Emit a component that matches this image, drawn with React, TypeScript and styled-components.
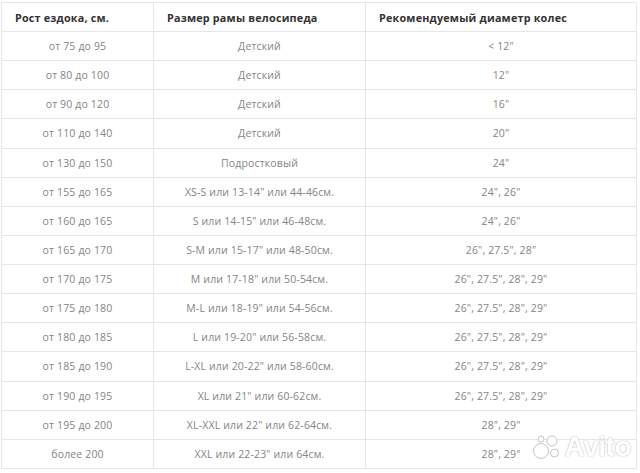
import React from "react";
import styled, { createGlobalStyle } from "styled-components";

const GlobalStyle = createGlobalStyle`
  html, body {
    margin: 0;
    padding: 0;
    background: #fff;
  }
  body {
    font-family: "Open Sans", "Liberation Sans", sans-serif;
  }
`;

const Page = styled.div`
  position: relative;
  width: 640px;
  height: 473px;
  padding: 2px 4px 0 1px;
  box-sizing: border-box;
  overflow: hidden;
`;

const Table = styled.div`
  display: grid;
  grid-template-columns: 152px 212px 271px;
  grid-template-rows: 29px repeat(15, 29.13px);
  border-top: 1px solid #e6e6e6;
  border-left: 1px solid #e6e6e6;
`;

const Cell = styled.div<{ $head?: boolean }>`
  display: flex;
  align-items: center;
  justify-content: ${(p) => (p.$head ? "flex-start" : "center")};
  padding: ${(p) => (p.$head ? "0 0 0 13px" : "0")};
  border-right: 1px solid #e6e6e6;
  border-bottom: 1px solid #e6e6e6;
  font-size: ${(p) => (p.$head ? "10.8px" : "10.5px")};
  font-weight: ${(p) => (p.$head ? 700 : 400)};
  color: ${(p) => (p.$head ? "#333" : "#858585")};
  letter-spacing: ${(p) => (p.$head ? "0.2px" : "0.15px")};
  white-space: nowrap;
`;

const Watermark = styled.div`
  position: absolute;
  right: 9px;
  bottom: 10px;
  display: flex;
  align-items: center;
  gap: 3px;
`;

const WatermarkText = styled.span`
  font-family: "Liberation Sans", Arial, sans-serif;
  font-size: 28px;
  font-weight: 700;
  color: #fff;
  letter-spacing: -0.5px;
  text-shadow: 0 0 1px #b5b5b5, 0 0 2px #d0d0d0;
`;

const rows: [string, string, string][] = [
  ["от 75 до 95", "Детский", "< 12\""],
  ["от 80 до 100", "Детский", "12\""],
  ["от 90 до 120", "Детский", "16\""],
  ["от 110 до 140", "Детский", "20\""],
  ["от 130 до 150", "Подростковый", "24\""],
  ["от 155 до 165", "XS-S или 13-14\" или 44-46см.", "24\", 26\""],
  ["от 160 до 165", "S или 14-15\" или 46-48см.", "24\", 26\""],
  ["от 165 до 170", "S-M или 15-17\" или 48-50см.", "26\", 27.5\", 28\""],
  ["от 170 до 175", "M или 17-18\" или 50-54см.", "26\", 27.5\", 28\", 29\""],
  ["от 175 до 180", "M-L или 18-19\" или 54-56см.", "26\", 27.5\", 28\", 29\""],
  ["от 180 до 185", "L или 19-20\" или 56-58см.", "26\", 27.5\", 28\", 29\""],
  ["от 185 до 190", "L-XL или 20-22\" или 58-60см.", "26\", 27.5\", 28\", 29\""],
  ["от 190 до 195", "XL или 21\" или 60-62см.", "26\", 27.5\", 28\", 29\""],
  ["от 195 до 200", "XL-XXL или 22\" или 62-64см.", "28\", 29\""],
  ["более 200", "XXL или 22-23\" или 64см.", "28\", 29\""],
];

function AvitoDots() {
  return (
    <svg width="30" height="26" viewBox="0 0 30 26">
      <g fill="#fff" stroke="#b5b5b5" strokeWidth="0.8">
        <circle cx="9" cy="17" r="7.5" />
        <circle cx="20" cy="7" r="5" />
        <circle cx="22.5" cy="19" r="4" />
        <circle cx="9" cy="5" r="3" />
      </g>
    </svg>
  );
}

export default function App() {
  return (
    <Page>
      <GlobalStyle />
      <Table>
        <Cell $head>Рост ездока, см.</Cell>
        <Cell $head>Размер рамы велосипеда</Cell>
        <Cell $head>Рекомендуемый диаметр колес</Cell>
        {rows.map((r, i) => (
          <React.Fragment key={i}>
            <Cell>{r[0]}</Cell>
            <Cell>{r[1]}</Cell>
            <Cell>{r[2]}</Cell>
          </React.Fragment>
        ))}
      </Table>
      <Watermark>
        <AvitoDots />
        <WatermarkText>Avito</WatermarkText>
      </Watermark>
    </Page>
  );
}
